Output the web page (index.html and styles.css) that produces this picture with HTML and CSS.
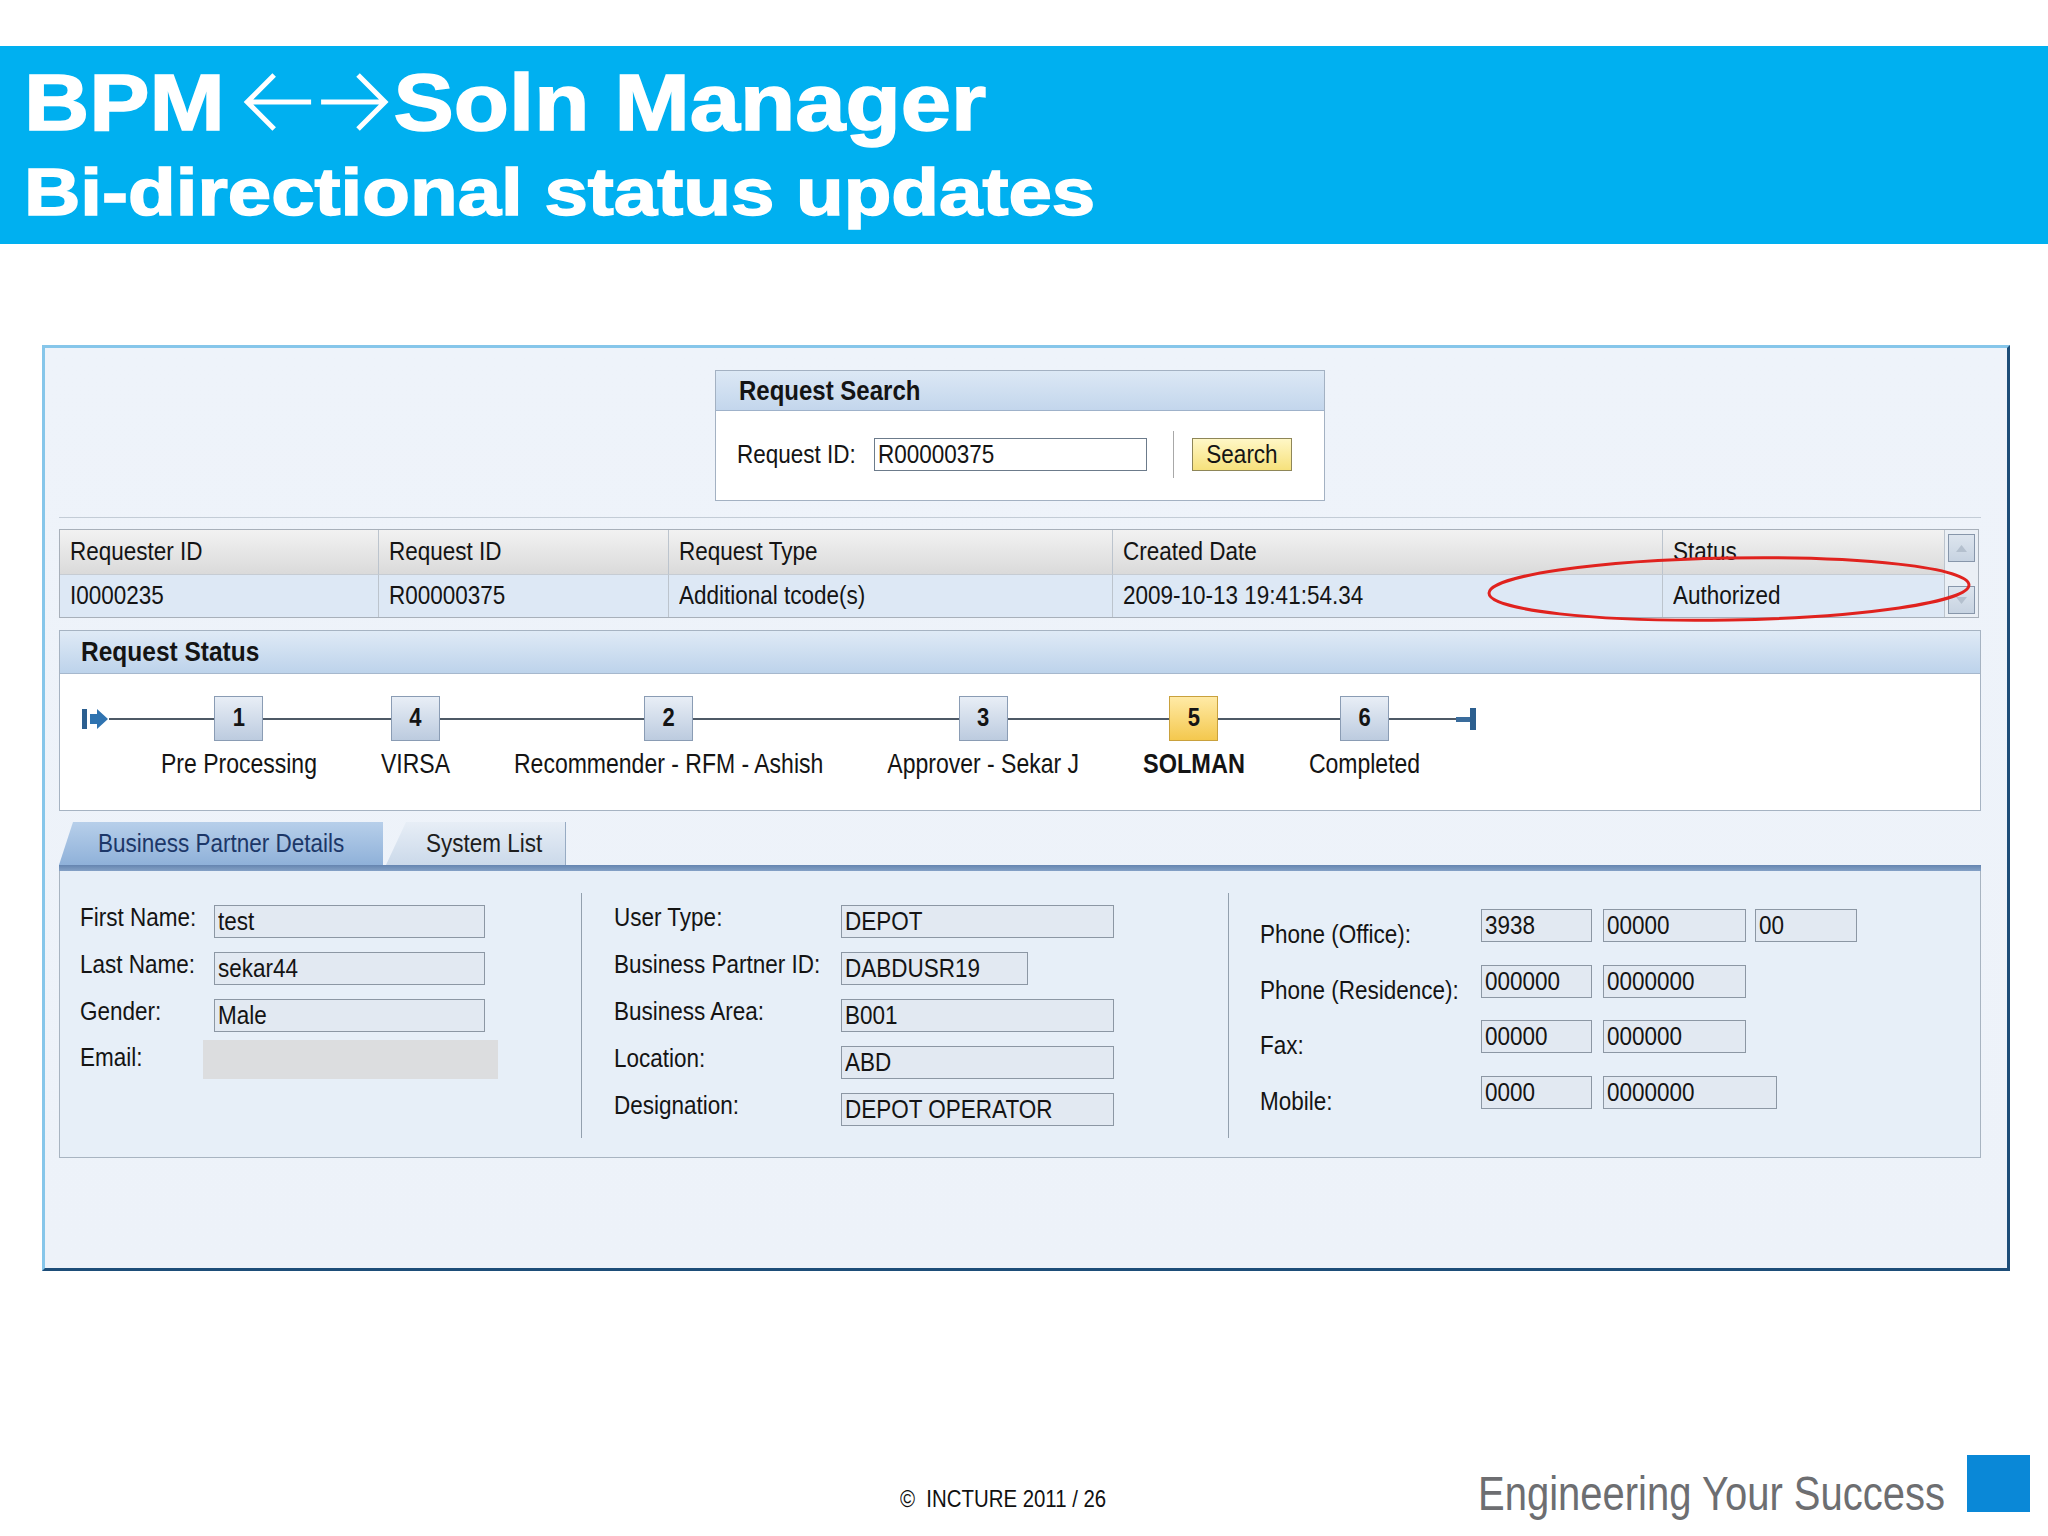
FILE: index.html
```html
<!DOCTYPE html>
<html>
<head>
<meta charset="utf-8">
<title>BPM Soln Manager</title>
<link rel="stylesheet" href="styles.css">
</head>
<body>
<div class="slide">
  <header class="band">
    <h1 class="title"><span class="title-in">BPM <svg class="arrows" role="img" aria-label="←→" width="129" height="60" viewBox="0 0 146 60" preserveAspectRatio="none"><path d="M31 3 L4 30 L31 57 M4 30 H68 M78 30 H142 M115 3 L142 30 L115 57" fill="none" stroke="#ffffff" stroke-width="5"/></svg>Soln Manager</span></h1>
    <h2 class="subtitle"><span class="subtitle-in">Bi-directional status updates</span></h2>
  </header>

  <section class="panel ui">
    <div class="search">
      <div class="search-head"><span class="tx">Request Search</span></div>
      <div class="search-body">
        <span class="search-label"><span class="tx">Request ID:</span></span>
        <span class="field white wide"><span class="tx">R00000375</span></span>
        <span class="vsep"></span>
        <span class="btn"><span class="tx">Search</span></span>
      </div>
    </div>

    <div class="rule"></div>

    <div class="table">
      <div class="cell head"><span class="tx">Requester ID</span></div>
      <div class="cell head"><span class="tx">Request ID</span></div>
      <div class="cell head"><span class="tx">Request Type</span></div>
      <div class="cell head"><span class="tx">Created Date</span></div>
      <div class="cell head"><span class="tx">Status</span></div>
      <div class="scroll">
        <span class="sbtn"><svg width="11" height="7" viewBox="0 0 11 7"><path d="M0 7 L5.5 0 L11 7 Z" fill="#b4c0ce"/></svg></span>
        <span class="sbtn"><svg width="11" height="7" viewBox="0 0 11 7"><path d="M0 0 L5.5 7 L11 0 Z" fill="#b4c0ce"/></svg></span>
      </div>
      <div class="cell data"><span class="tx">I0000235</span></div>
      <div class="cell data"><span class="tx">R00000375</span></div>
      <div class="cell data"><span class="tx">Additional tcode(s)</span></div>
      <div class="cell data"><span class="tx">2009-10-13 19:41:54.34</span></div>
      <div class="cell data"><span class="tx">Authorized</span></div>
    </div>

    <svg class="ellipse" width="500" height="80" viewBox="0 0 500 80">
      <ellipse cx="248" cy="38" rx="240" ry="31" fill="none" stroke="#e0221e" stroke-width="3" transform="rotate(-1 248 38)"/>
    </svg>

    <div class="status">
      <div class="status-head"><span class="tx">Request Status</span></div>
      <div class="status-body">
        <div class="track">
          <svg class="start-icon" width="27" height="22" viewBox="0 0 27 22">
            <rect x="0" y="1" width="5" height="20" fill="#2c5f8f"/>
            <path d="M8 6 H15 V1 L26 11 L15 21 V16 H8 Z" fill="#2f73b0"/>
          </svg>
          <div class="step"><div class="box"><span class="tx">1</span></div><div class="step-label"><span class="tx">Pre Processing</span></div></div>
          <div class="step"><div class="box"><span class="tx">4</span></div><div class="step-label"><span class="tx">VIRSA</span></div></div>
          <div class="step"><div class="box"><span class="tx">2</span></div><div class="step-label"><span class="tx">Recommender - RFM - Ashish</span></div></div>
          <div class="step"><div class="box"><span class="tx">3</span></div><div class="step-label"><span class="tx">Approver - Sekar J</span></div></div>
          <div class="step current"><div class="box"><span class="tx">5</span></div><div class="step-label"><span class="tx">SOLMAN</span></div></div>
          <div class="step"><div class="box"><span class="tx">6</span></div><div class="step-label"><span class="tx">Completed</span></div></div>
          <svg class="end-icon" width="22" height="22" viewBox="0 0 22 22">
            <rect x="0" y="9" width="16" height="5" fill="#3a6c9c"/>
            <rect x="14" y="0" width="6" height="22" fill="#2c5f8f"/>
          </svg>
        </div>
      </div>
    </div>

    <div class="tabs">
      <div class="tab active"><span class="tx">Business Partner Details</span></div>
      <div class="tab second"><span class="tx">System List</span></div>
    </div>
    <div class="tabbar"></div>

    <div class="details">
      <div class="col c1">
        <div class="row"><span class="lbl"><span class="tx">First Name:</span></span><span class="field w271"><span class="tx">test</span></span></div>
        <div class="row"><span class="lbl"><span class="tx">Last Name:</span></span><span class="field w271"><span class="tx">sekar44</span></span></div>
        <div class="row"><span class="lbl"><span class="tx">Gender:</span></span><span class="field w271"><span class="tx">Male</span></span></div>
        <div class="row email"><span class="lbl"><span class="tx">Email:</span></span><span class="blank"></span></div>
      </div>
      <div class="dsep"></div>
      <div class="col c2">
        <div class="row"><span class="lbl"><span class="tx">User Type:</span></span><span class="field w273"><span class="tx">DEPOT</span></span></div>
        <div class="row"><span class="lbl"><span class="tx">Business Partner ID:</span></span><span class="field w187"><span class="tx">DABDUSR19</span></span></div>
        <div class="row"><span class="lbl"><span class="tx">Business Area:</span></span><span class="field w273"><span class="tx">B001</span></span></div>
        <div class="row"><span class="lbl"><span class="tx">Location:</span></span><span class="field w273"><span class="tx">ABD</span></span></div>
        <div class="row"><span class="lbl"><span class="tx">Designation:</span></span><span class="field w273"><span class="tx">DEPOT OPERATOR</span></span></div>
      </div>
      <div class="dsep"></div>
      <div class="col c3">
        <div class="row"><span class="lbl"><span class="tx">Phone (Office):</span></span><span class="field w111"><span class="tx">3938</span></span><span class="field w143"><span class="tx">00000</span></span><span class="field w102"><span class="tx">00</span></span></div>
        <div class="row"><span class="lbl"><span class="tx">Phone (Residence):</span></span><span class="field w111"><span class="tx">000000</span></span><span class="field w143"><span class="tx">0000000</span></span></div>
        <div class="row"><span class="lbl"><span class="tx">Fax:</span></span><span class="field w111"><span class="tx">00000</span></span><span class="field w143"><span class="tx">000000</span></span></div>
        <div class="row"><span class="lbl"><span class="tx">Mobile:</span></span><span class="field w111"><span class="tx">0000</span></span><span class="field w174"><span class="tx">0000000</span></span></div>
      </div>
    </div>
  </section>

  <footer class="foot">
    <span class="copy"><span class="tx">©&nbsp;&nbsp;INCTURE 2011 / 26</span></span>
    <span class="tagline"><span class="tx">Engineering Your Success</span></span>
    <span class="square"></span>
  </footer>
</div>
</body>
</html>
```

FILE: styles.css
```css
html, body {
  margin: 0;
  padding: 0;
  background: #ffffff;
}

.slide {
  width: 2048px;
  height: 1536px;
  overflow: hidden;
  position: relative;
  background: #ffffff;
}

/* ---------- Header band ---------- */
.band {
  margin-top: 46px;
  height: 198px;
  box-sizing: border-box;
  background: #00b0f0;
  padding: 17px 0 0 24px;
  color: #ffffff;
  font-family: "Liberation Sans", Arial, sans-serif;
  font-weight: bold;
}

.title {
  margin: 0;
  font-size: 80px;
  line-height: 80px;
  font-weight: bold;
  white-space: nowrap;
}

.title-in,
.subtitle-in {
  display: inline-block;
  transform-origin: 0 50%;
  -webkit-text-stroke: 1.5px #ffffff;
}

.title-in { transform: scaleX(1.13); }
.subtitle-in { transform: scaleX(1.165); }

.arrows {
  display: inline-block;
  vertical-align: -2px;
  margin-left: -6px;
  margin-right: 4px;
}

.subtitle {
  margin: 15px 0 0 0;
  font-size: 67px;
  line-height: 67px;
  font-weight: bold;
  white-space: nowrap;
}

/* ---------- Main SAP panel ---------- */
.ui {
  font-family: "Liberation Sans", Arial, sans-serif;
  font-size: 22.5px;
  color: #141414;
}

.tx {
  display: inline-block;
  transform: scaleY(1.18);
  white-space: nowrap;
}

.panel {
  position: relative;
  margin: 101px 0 0 42px;
  width: 1968px;
  height: 926px;
  box-sizing: border-box;
  border-top: 3px solid #86c6ea;
  border-left: 3px solid #86c6ea;
  border-right: 3px solid #1d4d78;
  border-bottom: 3px solid #1d4d78;
  background: linear-gradient(180deg, #eef3fa 0%, #edf2f9 100%);
  padding: 22px 26px 0 14px;
}

/* Request search box */
.search {
  width: 610px;
  height: 131px;
  box-sizing: border-box;
  margin: 0 auto;
  border: 1px solid #a3b1c2;
  background: #ffffff;
}

.search-head {
  height: 40px;
  box-sizing: border-box;
  border-bottom: 1px solid #9fb2ca;
  background: linear-gradient(180deg, #dce8f5 0%, #c3d6ec 100%);
  padding-left: 23px;
  font-weight: bold;
  font-size: 24px;
  line-height: 39px;
}

.search-head .tx,
.status-head .tx { transform: scaleY(1.15); }

.search-body {
  display: flex;
  align-items: center;
  height: 89px;
  padding-left: 21px;
  padding-bottom: 2px;
  box-sizing: border-box;
}

.search-label {
  width: 137px;
  line-height: 33px;
  flex: none;
}

.field {
  display: inline-block;
  height: 33px;
  box-sizing: border-box;
  border: 1px solid #8c97a4;
  background: #e2e9f2;
  padding-left: 3px;
  line-height: 31px;
  white-space: nowrap;
  overflow: hidden;
  flex: none;
}

.field.white {
  background: #ffffff;
  border-color: #6c7b8b;
}

.field.wide { width: 273px; }

.vsep {
  width: 1px;
  height: 47px;
  background: #a8a8a8;
  margin-left: 26px;
  flex: none;
}

.btn {
  margin-left: 18px;
  width: 100px;
  height: 33px;
  box-sizing: border-box;
  border: 1px solid #8e8658;
  background: linear-gradient(180deg, #fff7c6 0%, #f6e17c 100%);
  text-align: center;
  line-height: 31px;
  flex: none;
}

.rule {
  height: 1px;
  background: #c3ccd6;
  margin-top: 16px;
}

/* Result table */
.table {
  margin-top: 11px;
  width: 1920px;
  box-sizing: border-box;
  border: 1px solid #a8b0ba;
  display: grid;
  grid-template-columns: 319px 290px 444px 550px 282px 33px;
  grid-template-rows: 45px 42px;
}

.cell {
  padding-left: 10px;
  border-right: 1px solid #bcc4cd;
  white-space: nowrap;
  overflow: hidden;
}

.cell.head {
  background: linear-gradient(180deg, #f2f2f2 0%, #dadada 100%);
  border-bottom: 1px solid #c6ccd3;
  line-height: 44px;
}

.cell.data {
  background: #dde8f5;
  line-height: 42px;
}

.scroll {
  grid-column: 6;
  grid-row: 1 / 3;
  background: #eaeff5;
  display: flex;
  flex-direction: column;
  justify-content: space-between;
  align-items: center;
  padding: 4px 0 3px 0;
}

.sbtn {
  width: 27px;
  height: 28px;
  box-sizing: border-box;
  border: 1px solid #8796aa;
  background: linear-gradient(180deg, #dde5ee 0%, #c7d3e1 100%);
  display: flex;
  align-items: center;
  justify-content: center;
}

.ellipse {
  position: absolute;
  left: 1436px;
  top: 203px;
}

/* Request status */
.status {
  margin-top: 12px;
  height: 181px;
  box-sizing: border-box;
  border: 1px solid #a6b3c2;
  background: #ffffff;
}

.status-head {
  height: 43px;
  box-sizing: border-box;
  border-bottom: 1px solid #a6b8cd;
  background: linear-gradient(180deg, #dfeaf6 0%, #bdd3eb 100%);
  padding-left: 21px;
  font-weight: bold;
  font-size: 24.5px;
  line-height: 42px;
}

.status-body {
  padding: 22px 0 0 22px;
}

.track {
  display: inline-flex;
  align-items: flex-start;
  position: relative;
  isolation: isolate;
}

.track::before {
  content: "";
  position: absolute;
  left: 27px;
  right: 8px;
  top: 22px;
  height: 2px;
  background: #4e5966;
  z-index: -1;
}

.start-icon {
  margin-top: 12px;
  margin-right: 52px;
  flex: none;
}

.end-icon {
  margin-top: 12px;
  margin-left: 36px;
  flex: none;
}

.step {
  display: flex;
  flex-direction: column;
  align-items: center;
  margin-right: 64px;
}

.step:nth-last-of-type(1) {
  margin-right: 0;
}

.box {
  width: 49px;
  height: 45px;
  box-sizing: border-box;
  border: 1px solid #8a9cb4;
  background: linear-gradient(180deg, #e8eef6 0%, #bccbdf 100%);
  text-align: center;
  font-weight: bold;
  font-size: 22px;
  line-height: 42px;
}

.step.current .box {
  border-color: #c9a13d;
  background: linear-gradient(180deg, #ffeaa6 0%, #f4c84e 100%);
}

.step-label {
  margin-top: 10px;
  line-height: 27px;
  font-size: 23px;
  white-space: nowrap;
}

.step.current .step-label {
  font-weight: bold;
  font-size: 23.5px;
}

/* Tabs */
.tabs {
  display: flex;
  gap: 3px;
  margin-top: 11px;
  height: 43px;
}

.tab {
  height: 43px;
  box-sizing: border-box;
  line-height: 43px;
  white-space: nowrap;
}

.tab.active {
  width: 324px;
  padding-left: 39px;
  color: #1c3768;
  background: linear-gradient(180deg, #b7cfea 0%, #8fb1d9 100%);
  clip-path: polygon(14px 0, 100% 0, 100% 100%, 0 100%);
}

.tab.second {
  width: 180px;
  padding-left: 40px;
  color: #1e1e1e;
  background: linear-gradient(180deg, #e7eef6 0%, #cbd9ea 100%);
  clip-path: polygon(20px 0, 100% 0, 100% 100%, 0 100%);
  border-right: 1px solid #97abc3;
}

.tabbar {
  height: 6px;
  background: linear-gradient(180deg, #6585b0 0%, #84a1c6 100%);
}

/* Details */
.details {
  height: 287px;
  box-sizing: border-box;
  border: 1px solid #a8b4c1;
  border-top: none;
  background: #e7eff8;
  display: flex;
  align-items: flex-start;
  padding: 22px 0 0 20px;
}

.dsep {
  width: 1px;
  height: 245px;
  background: #93a0ae;
  flex: none;
}

.col {
  box-sizing: border-box;
  flex: none;
}

.c1 { width: 501px; padding-top: 12px; }
.c2 { width: 646px; padding-top: 12px; padding-left: 32px; }
.c3 { padding-top: 16px; padding-left: 31px; }

.row {
  display: flex;
  align-items: center;
  height: 33px;
  margin-bottom: 14px;
}

.lbl {
  flex: none;
  white-space: nowrap;
  line-height: 27px;
  padding-bottom: 8px;
}

.c1 .lbl { width: 134px; }
.c2 .lbl { width: 227px; }

.c1 .row.email {
  height: 39px;
  margin-top: -6px;
}

.c1 .row.email .lbl { width: 123px; padding-bottom: 4px; }

.blank {
  width: 295px;
  height: 39px;
  background: #dcdddf;
}

.c3 .row {
  align-items: flex-start;
  margin-bottom: 22.5px;
}

.c3 .lbl {
  width: 221px;
  padding-top: 12px;
  padding-bottom: 0;
}

.c3 .field + .field { margin-left: 11px; }
.c3 .field.w102 { margin-left: 9px; }

.w271 { width: 271px; }
.w273 { width: 273px; }
.w187 { width: 187px; }
.w111 { width: 111px; }
.w143 { width: 143px; }
.w102 { width: 102px; }
.w174 { width: 174px; }

/* Footer */
.foot {
  margin-top: 184px;
  height: 57px;
  display: flex;
  align-items: flex-end;
  padding: 0 18px 0 900px;
  font-family: "Liberation Sans", Arial, sans-serif;
}

.copy {
  font-size: 20.4px;
  line-height: 24px;
  margin-bottom: 1px;
  color: #111111;
  white-space: nowrap;
}

.copy .tx { transform: scaleY(1.17); }

.tagline {
  margin-left: auto;
  font-size: 40px;
  line-height: 48px;
  margin-bottom: -5px;
  color: #6d6e71;
  white-space: nowrap;
}

.tagline .tx { transform: scaleY(1.2); }

.square {
  margin-left: 22px;
  width: 63px;
  height: 57px;
  background: #0a88d7;
  flex: none;
}
```
